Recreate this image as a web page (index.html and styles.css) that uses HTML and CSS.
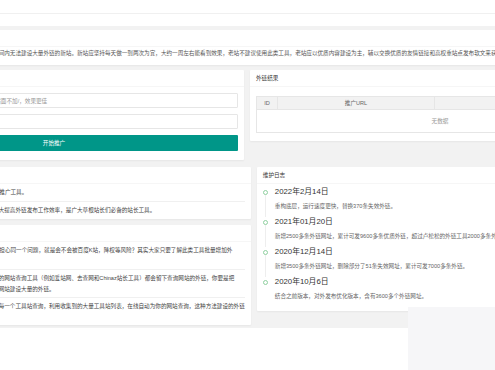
FILE: index.html
```html
<!DOCTYPE html>
<html lang="zh-CN">
<head>
  <meta charset="UTF-8" />
  <meta name="viewport" content="width=device-width, initial-scale=1.0"/>
  <title>超级外链工具</title>
  <link rel="stylesheet" href="styles.css">
</head>
<body>
  <div class="page">
    <div class="topbar"></div>
    <div class="tabbar"></div>

    <div class="main">
      <div class="card">
        <div class="card-header">使用说明</div>
        <div class="card-body notice">温馨提示：本工具主要适用于刚上线不久或者一段时间内无法建设大量外链的新站。新站应坚持每天做一到两次为宜，大约一周左右能看到效果，老站不建议使用此类工具，老站应以优质内容建设为主，辅以交换优质的友情链接和高权重站点发布软文来获取外链。</div>
      </div>

      <div class="row first">
        <div class="col">
          <div class="card">
            <div class="card-header">外链推广</div>
            <div class="card-body form">
              <input type="text" class="input" placeholder="请输入您需要推广的网址，网址前面需加http://，后面不加/，效果更佳">
              <input type="text" class="input" placeholder="请输入验证码">
              <button class="btn">开始推广</button>
            </div>
          </div>
        </div>

        <div class="col">
          <div class="card">
            <div class="card-header">外链结果</div>
            <div class="card-body result">
              <div class="table">
                <div class="thead">
                  <div class="th">ID</div>
                  <div class="th">推广URL</div>
                  <div class="th">查询状态</div>
                </div>
                <div class="none">无数据</div>
              </div>
            </div>
          </div>
        </div>
      </div>

      <div class="row">
        <div class="col stack">
          <div class="card">
            <div class="card-header">工具介绍</div>
            <div class="card-body list">
              <div class="item">超级外链工具是一款能批量增加网站外链的免费SEO推广工具。</div>
              <div class="item">利用本工具可自动批量发送外链，免去手动操作，大大提高外链发布工作效率，是广大草根站长们必备的站长工具。</div>
            </div>
          </div>

          <div class="card">
            <div class="card-header">常见问题</div>
            <div class="card-body list faq">
              <div class="item">很多站长朋友在使用此类SEO外链推广工具时，都会担心同一个问题，就是会不会被百度K站，降权等风险？其实大家只要了解此类工具批量增加外<br>链的原理，就不会有这种担心了。</div>
              <div class="item">外链工具原理其实很简单，目前互联网上大部分常用的网站查询工具（例如爱站网、去查网和Chinaz站长工具）都会留下查询网站的外链，你要是把<br>自己的网址在这些工具站都查询一遍，就可以为你的网站建设大量的外链。</div>
              <div class="item">而传统的方法需要站长手动将自己的网址逐个提交到每一个工具站查询，利用收集到的大量工具站列表，在线自动为你的网站查询，这种方法建设的外链<br>安全可靠，效果稳定。</div>
            </div>
          </div>
        </div>

        <div class="col">
          <div class="card">
            <div class="card-header">维护日志</div>
            <div class="card-body timeline">
              <div class="tl-item">
                <div class="tl-axis"><span class="dot"></span><span class="line"></span></div>
                <div class="tl-content">
                  <div class="tl-title">2022年2月14日</div>
                  <p>重构底层，运行速度更快，替换370条失效外链。</p>
                </div>
              </div>
              <div class="tl-item">
                <div class="tl-axis"><span class="dot"></span><span class="line"></span></div>
                <div class="tl-content">
                  <div class="tl-title">2021年01月20日</div>
                  <p>新增2500多条外链网址，累计可发9600多条优质外链，超过卢松松的外链工具2000多条外链。</p>
                </div>
              </div>
              <div class="tl-item">
                <div class="tl-axis"><span class="dot"></span><span class="line"></span></div>
                <div class="tl-content">
                  <div class="tl-title">2020年12月14日</div>
                  <p>新增3500多条外链网址，删除部分了51条失效网址，累计可发7000多条外链。</p>
                </div>
              </div>
              <div class="tl-item">
                <div class="tl-axis"><span class="dot"></span><span class="line"></span></div>
                <div class="tl-content">
                  <div class="tl-title">2020年10月6日</div>
                  <p>结合之前版本，对外发布优化版本，含有3600多个外链网址。</p>
                </div>
              </div>
            </div>
          </div>
        </div>
      </div>
    </div>
  </div>

  <div class="float-panel"></div>
</body>
</html>
```

FILE: styles.css
```css
* {
  box-sizing: border-box;
  margin: 0;
  padding: 0;
}

html, body {
  overflow: hidden;
}

body {
  background-color: #fff;
  font-family: "Liberation Sans", "Noto Sans CJK SC", sans-serif;
  font-size: 5.6px;
  color: #555;
}

/* page is wider than the window, scrolled a bit to the right */
.page {
  width: 778px;
  margin-left: -142px;
}

.topbar {
  height: 14px;
  border-bottom: 1px solid #f0f0f0;
}

.tabbar {
  height: 12px;
}

.main {
  background-color: #f2f2f2;
  padding: 4px 6px 3px;
}

.card {
  background-color: #fff;
  border-radius: 1px;
  box-shadow: 0 1px 2px rgba(0,0,0,0.05);
}

.card-header {
  height: 17px;
  line-height: 16px;
  padding: 0 6px;
  border-bottom: 1px solid #f6f6f6;
  color: #333;
}

.card-body {
  padding: 4px 6px;
}

.notice {
  padding: 1px 6px 7px;
  line-height: 10px;
  white-space: nowrap;
}

.row {
  display: grid;
  grid-template-columns: 1fr 1fr;
  gap: 6px;
  align-items: start;
  margin-top: 7px;
}

.row.first {
  margin-top: 5px;
}

.stack {
  display: flex;
  flex-direction: column;
  gap: 6px;
}

/* form */
.form {
  display: flex;
  flex-direction: column;
  gap: 6px;
  padding: 6px 6px 9px;
}

.input {
  height: 15px;
  padding: 0 4px;
  border: 1px solid #e6e6e6;
  border-radius: 1px;
  font: inherit;
  color: #333;
  outline: none;
}

.input::placeholder {
  color: #999;
}

.btn {
  height: 16px;
  border: none;
  border-radius: 1px;
  background-color: #009688;
  color: #fff;
  font: inherit;
  cursor: pointer;
}

/* result table */
.result {
  padding: 9px 6px 8px;
}

.table {
  border: 1px solid #e6e6e6;
}

.thead {
  display: grid;
  grid-template-columns: 21px 157px 1fr;
  height: 13px;
  background-color: #f2f2f2;
  border-bottom: 1px solid #e6e6e6;
}

.th {
  line-height: 12px;
  text-align: center;
  color: #666;
  border-right: 1px solid #e6e6e6;
}

.th:last-child {
  border-right: none;
}

.none {
  height: 22px;
  line-height: 22px;
  text-align: center;
  color: #999;
}

/* lists */
.list {
  padding: 0 6px;
}

.item {
  padding: 3px 0;
  line-height: 11px;
  white-space: nowrap;
  color: #444;
}

.faq .item {
  padding: 2.5px 0;
}

.item + .item {
  border-top: 1px solid #f0f0f0;
}

/* timeline */
.timeline {
  padding: 3px 6px 4px;
}

.tl-item {
  display: flex;
}

.tl-axis {
  width: 6px;
  display: flex;
  flex-direction: column;
  align-items: center;
}

.dot {
  width: 5px;
  height: 5px;
  margin-top: 2.5px;
  border: 1px solid #8fd0a0;
  border-radius: 50%;
  background-color: #fff;
}

.line {
  flex: 1;
  width: 1px;
  background-color: #eee;
}

.tl-item:last-child .line {
  visibility: hidden;
}

.tl-content {
  margin-left: 6px;
  padding-bottom: 6px;
}

.tl-title {
  font-size: 7.8px;
  line-height: 10px;
  color: #333;
}

.tl-content p {
  margin-top: 4px;
  line-height: 10px;
  white-space: nowrap;
  color: #666;
}

.float-panel {
  position: fixed;
  left: 408px;
  top: 307px;
  right: 0;
  bottom: 0;
  background-color: #f6f6f8;
}
```
